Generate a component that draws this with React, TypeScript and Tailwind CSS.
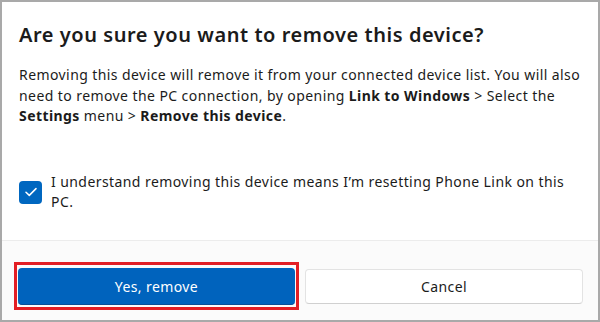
import React, { useState } from 'react';

export default function App() {
  const [checked, setChecked] = useState(true);

  return (
    <div
      className="w-[600px] h-[322px] border-2 border-[#a9a9a9] bg-white flex flex-col text-[#1b1b1b]"
      style={{ fontFamily: '"Noto Sans", "Open Sans", sans-serif' }}
    >
      <div className="flex-1 px-[17px] pt-[19px]">
        <h1 className="text-[20px] leading-[28px] font-semibold tracking-[0.55px]">
          Are you sure you want to remove this device?
        </h1>
        <p className="mt-[16px] text-[14px] leading-[20.5px] tracking-[0.42px] whitespace-nowrap">
          Removing this device will remove it from your connected device list. You will also
          <br />
          need to remove the PC connection, by opening <b className="font-bold">Link to Windows</b> &gt; Select the
          <br />
          <b className="font-bold">Settings</b> menu &gt; <b className="font-bold">Remove this device</b>.
        </p>
        <label className="mt-[54px] flex items-start gap-[9px] cursor-pointer">
          <button
            type="button"
            onClick={() => setChecked(!checked)}
            className={
              checked
                ? 'w-[23px] h-[23px] shrink-0 rounded-[4px] bg-[#0067c0] flex items-center justify-center'
                : 'w-[23px] h-[23px] shrink-0 rounded-[4px] border border-[#8a8a8a] bg-white'
            }
          >
            {checked && (
              <svg width="12" height="10" viewBox="0 0 12 10" fill="none">
                <path d="M1 5.2 L4.3 8.4 L11 1.6" stroke="white" strokeWidth="1.5" strokeLinecap="round" strokeLinejoin="round" />
              </svg>
            )}
          </button>
          <span className="-mt-[9px] text-[14px] leading-[20.5px] tracking-[0.42px] whitespace-nowrap">
            I understand removing this device means I’m resetting Phone Link on this
            <br />
            PC.
          </span>
        </label>
      </div>
      <div className="h-[80px] border-t border-[#ececec] bg-[#fbfbfb] pl-[12px] pt-[21px] flex gap-[6px]">
        <div className="w-[285px] border-[3px] border-[#e31e24] px-[1px] pt-[3px] h-[48px]">
          <button
            type="button"
            className="w-full h-[37px] rounded-[4px] bg-[#0063bd] border-b border-[#0a4f96] text-white text-[14px] tracking-[0.4px]"
          >
            Yes, remove
          </button>
        </div>
        <div className="pt-[7px]">
          <button
            type="button"
            className="w-[278px] h-[35px] rounded-[4px] bg-white border border-[#e3e3e3] border-b-[#d0d0d0] text-[14px] text-[#1b1b1b] tracking-[0.4px]"
          >
            Cancel
          </button>
        </div>
      </div>
    </div>
  );
}
